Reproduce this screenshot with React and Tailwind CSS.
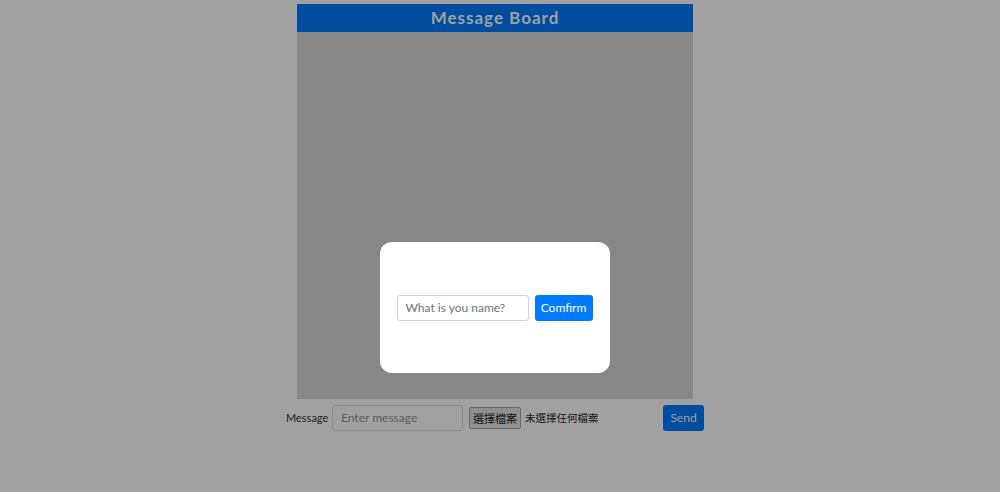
export default function App() {
  const font = { fontFamily: 'Lato, "Noto Sans", "Noto Sans CJK TC", sans-serif' };
  const cjk = { fontFamily: '"Noto Sans CJK TC", sans-serif' };
  return (
    <div className="relative w-[1000px] h-[492px] bg-[#a1a1a1] overflow-hidden" style={font}>
      <div className="flex flex-col items-center pt-[4px] pr-[10px]">
        <div className="w-[396px] flex flex-col">
          <div className="h-[28px] bg-[#004da0] flex items-center justify-center text-[#a1a1a1] font-bold text-[17px] tracking-[1px]">
            Message Board
          </div>
          <div className="h-[367px] bg-[#878787]" />
        </div>
        <div className="w-[418px] mt-[6px] flex items-center h-[26px]">
          <span className="text-[11px] text-[#1a1a1a] w-[46px]">Message</span>
          <div className="w-[131px] h-[26px] border border-[#8a8a8a] rounded-[3px] flex items-center px-[8px] text-[12px] text-[#595959]">
            Enter message
          </div>
          <div className="ml-[6px] w-[52px] h-[22px] border border-[#666] rounded-[2px] bg-[#8f8f8f] flex items-center justify-center text-[11px] text-[#111]" style={cjk}>
            選擇檔案
          </div>
          <span className="ml-[4px] text-[10.5px] text-[#111]" style={cjk}>未選擇任何檔案</span>
          <div className="flex-1" />
          <div className="w-[41px] h-[26px] bg-[#004da0] rounded-[3px] flex items-center justify-center text-[12px] text-[#a1a1a1]">
            Send
          </div>
        </div>
      </div>
      <div className="absolute left-[380px] top-[242px] w-[230px] h-[131px] bg-white rounded-[12px] flex items-center justify-center gap-[6px] pr-[1px]">
        <div className="w-[132px] h-[26px] border border-[#ced4da] rounded-[3px] flex items-center px-[8px] text-[12px] text-[#6c757d]">
          What is you name?
        </div>
        <div className="w-[58px] h-[26px] bg-[#007bff] rounded-[3px] flex items-center justify-center text-[12px] text-white">
          Comfirm
        </div>
      </div>
    </div>
  );
}
